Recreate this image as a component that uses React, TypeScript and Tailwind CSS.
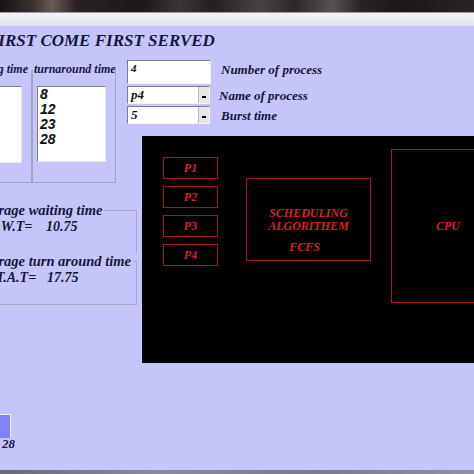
import React from "react";

const serif = "font-['Liberation_Serif',serif]";
const navy = "text-[#16163c]";

function Combo({ value }: { value: string }) {
  return (
    <div className="flex w-[83px] h-[18px] bg-white border-t border-l border-[#7c7c8c] border-b-[#f4f4f8] border-r-[#f4f4f8] border-b border-r">
      <div className="flex-1 pl-[3px] text-[13px] leading-[16px] font-bold italic text-[#111]">{value}</div>
      <div className="w-[11px] h-full bg-[#e6e6e6] border-l border-[#b8b8c0] flex items-center justify-center">
        <div className="w-[4px] h-[2px] bg-black mt-[3px]" />
      </div>
    </div>
  );
}

function PBox({ label }: { label: string }) {
  return (
    <div className="w-[55px] h-[22px] border border-[#a8141e] flex items-center justify-center text-[12px] font-bold italic text-[#d8202c]">
      {label}
    </div>
  );
}

export default function App() {
  return (
    <div className={`w-[474px] h-[474px] overflow-hidden flex flex-col bg-[#c5c5fc] ${serif}`}>
      <div className="h-[12px] shrink-0 bg-[linear-gradient(90deg,#1a1414_0%,#3a3030_7%,#6a5c54_11%,#2a2222_16%,#1e1818_30%,#3c3434_38%,#242020_45%,#4a4242_55%,#2c2626_62%,#5a5252_70%,#2a2424_76%,#1c1818_85%,#2a2424_100%)]" />
      <div className="h-[1px] shrink-0 bg-[#9a9aa4]" />
      <div className="h-[13px] shrink-0 bg-[linear-gradient(180deg,#f4f4f8,#e0e0ea)]" />

      <div className="flex-1 overflow-hidden flex flex-col">
        <div className={`mt-[5px] h-[20px] leading-[20px] text-[17px] font-bold italic ${navy} -ml-[13px] whitespace-nowrap`}>
          FIRST COME FIRST SERVED
        </div>

        <div className="flex">
          {/* left column */}
          <div className="w-[127px] shrink-0 flex flex-col">
            <div className="flex mt-[11px]">
              <div className="w-[112px] -ml-[80px] shrink-0 flex flex-col">
                <div className={`h-[14px] leading-[14px] text-[12px] font-bold italic ${navy} text-right pr-[4px] whitespace-nowrap`}>
                  waiting time
                </div>
                <div className="-mt-[6px] h-[113px] border-r border-b border-[#a4a4c4] flex justify-end pr-[9px] pt-[16px]">
                  <div className="w-[60px] h-[77px] bg-white border-t border-l border-[#80808c] border-r border-b border-r-[#e8e8f0] border-b-[#e8e8f0]" />
                </div>
              </div>
              <div className="w-[84px] shrink-0 flex flex-col">
                <div className={`h-[14px] leading-[14px] text-[12px] font-bold italic ${navy} pl-[2px] whitespace-nowrap`}>
                  turnaround time
                </div>
                <div className="-mt-[6px] h-[113px] border-l border-r border-b border-[#a4a4c4] pl-[4px] pt-[16px]">
                  <div className="w-[69px] h-[76px] bg-white border-t border-l border-[#80808c] border-r border-b border-r-[#e8e8f0] border-b-[#e8e8f0] pl-[2px] font-['Liberation_Sans',sans-serif] text-[14px] leading-[15px] font-bold italic text-[#111]">
                    <div>8</div>
                    <div>12</div>
                    <div>23</div>
                    <div>28</div>
                  </div>
                </div>
              </div>
            </div>

            <fieldset className={`mt-[19px] -ml-[23px] w-[160px] h-[51px] shrink-0 border-t border-r border-[#a8a8c8] ${navy}`}>
              <legend className="text-[14.5px] leading-[16px] font-bold italic whitespace-nowrap pr-[2px]">Average waiting time</legend>
              <div className="flex pl-[11px] mt-[1px] text-[14px] leading-[16px] font-bold italic whitespace-nowrap">
                <span className="w-[58px]">A.W.T=</span>
                <span>10.75</span>
              </div>
            </fieldset>
            <fieldset className={`-ml-[23px] w-[160px] h-[52px] shrink-0 border-t border-r border-b border-[#a8a8c8] ${navy}`}>
              <legend className="text-[14.5px] leading-[16px] font-bold italic whitespace-nowrap pr-[2px]">Average turn around time</legend>
              <div className="flex pl-[19px] mt-[1px] text-[14px] leading-[16px] font-bold italic whitespace-nowrap">
                <span className="w-[51px]">T.A.T=</span>
                <span>17.75</span>
              </div>
            </fieldset>

            <div className="mt-[109px] -ml-[20px] w-[31px] h-[24px] bg-[#8282f8] border-t border-r border-[#eeeefc]" />
            <div className={`pl-[2px] -mt-[1px] text-[13px] leading-[14px] font-bold italic ${navy}`}>28</div>
          </div>

          {/* right column */}
          <div className="flex-1 flex flex-col">
            <div className="flex items-start mt-[9px]">
              <div className="w-[84px] h-[24px] bg-white border-t border-l border-[#7c7c8c] border-r border-b border-r-[#f4f4f8] border-b-[#f4f4f8] pl-[3px] text-[11px] leading-[14px] font-bold italic text-[#111]">
                4
              </div>
              <div className={`ml-[10px] mt-[2px] text-[13px] leading-[15px] font-bold italic ${navy} whitespace-nowrap`}>
                Number of process
              </div>
            </div>
            <div className="flex items-center mt-[2px]">
              <Combo value="p4" />
              <div className={`ml-[9px] text-[13px] leading-[15px] font-bold italic ${navy} whitespace-nowrap`}>
                Name of process
              </div>
            </div>
            <div className="flex items-center mt-[2px]">
              <Combo value="5" />
              <div className={`ml-[11px] text-[13px] leading-[15px] font-bold italic ${navy} whitespace-nowrap`}>
                Burst time
              </div>
            </div>

            <div className="mt-[12px] ml-[15px] w-[360px] h-[227px] shrink-0 bg-black relative">
              <div className="absolute left-[21px] top-[21px] flex flex-col gap-[7px]">
                <PBox label="P1" />
                <PBox label="P2" />
                <PBox label="P3" />
                <PBox label="P4" />
              </div>
              <div className="absolute left-[104px] top-[42px] w-[125px] h-[83px] border border-[#a8141e] flex flex-col items-center pt-[28px] text-[12px] leading-[13px] font-bold italic text-[#d8202c]">
                <div>SCHEDULING</div>
                <div>ALGORITHEM</div>
                <div className="mt-[8px] pr-[8px]">FCFS</div>
              </div>
              <div className="absolute left-[249px] top-[13px] w-[114px] h-[154px] border border-[#a8141e] flex items-center justify-center text-[12px] font-bold italic text-[#d8202c]">
                CPU
              </div>
            </div>
          </div>
        </div>
      </div>

      <div className="h-[4px] shrink-0 bg-[linear-gradient(90deg,#6a6a78,#8a8a9c,#7a7a8a,#9090a0)]" />
    </div>
  );
}
